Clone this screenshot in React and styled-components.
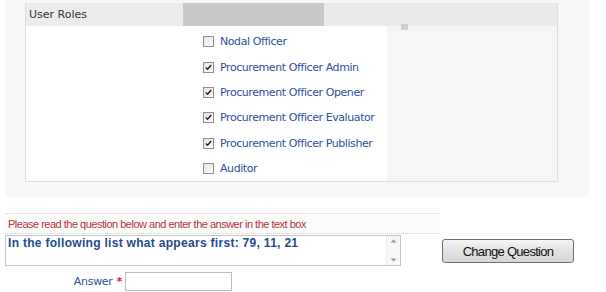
import React from "react";
import styled, { createGlobalStyle } from "styled-components";

const GlobalStyle = createGlobalStyle`
  html, body {
    margin: 0;
    padding: 0;
    background: #ffffff;
    font-family: "Liberation Sans", Arial, sans-serif;
  }
`;

const roles = [
  { name: "Nodal Officer", checked: false },
  { name: "Procurement Officer Admin", checked: true },
  { name: "Procurement Officer Opener", checked: true },
  { name: "Procurement Officer Evaluator", checked: true },
  { name: "Procurement Officer Publisher", checked: true },
  { name: "Auditor", checked: false },
];

const Page = styled.div`
  width: 606px;
  height: 292px;
  overflow: hidden;
`;

// grey rounded panel round the roles table
const Panel = styled.div`
  margin: 0 16px 0 5px;
  height: 198px;
  box-sizing: border-box;
  padding: 3px 32px 0 20px;
  background: #f7f7f7;
  border-radius: 0 0 7px 7px;
`;

const RolesTable = styled.div`
  border: 1px solid #dedede;
  border-top: none;
`;

const HeaderRow = styled.div`
  display: grid;
  grid-template-columns: 157px 141px 1fr;
  height: 22px;
  border-bottom: 1px solid #dedede;
`;

const HeaderLabel = styled.div`
  background: #ececec;
  color: #333333;
  font-family: "DejaVu Sans", Tahoma, sans-serif;
  font-size: 11px;
  line-height: 22px;
  padding: 1px 0 0 3px;
`;

const HeaderBlock = styled.div`
  background: #c9c9c9;
`;

const HeaderFill = styled.div`
  position: relative;
  background: #ebebeb;

  &::after {
    content: "";
    position: absolute;
    left: 77px;
    bottom: -4px;
    width: 7px;
    height: 6px;
    background: #cfcfcf;
  }
`;

const Body = styled.div`
  display: grid;
  grid-template-columns: 361px 1fr;
`;

const RoleList = styled.ul`
  list-style: none;
  margin: 0;
  padding: 3px 0 0 177px;
  background: #ffffff;
`;

const BodyFill = styled.div`
  background: #f6f6f6;
`;

const RoleItem = styled.li`
  display: flex;
  align-items: center;
  height: 25.4px;
`;

const Box = styled.span`
  display: inline-flex;
  align-items: center;
  justify-content: center;
  box-sizing: border-box;
  width: 11px;
  height: 11px;
  border: 1px solid #8e8e8e;
  background: linear-gradient(135deg, #e4e4e4, #ffffff);
  margin-right: 6px;
`;

const RoleName = styled.span`
  color: #2e4f9c;
  font-family: "DejaVu Sans", Tahoma, sans-serif;
  font-size: 11px;
  letter-spacing: -0.42px;
`;

const Bottom = styled.div`
  padding: 15px 0 0 5px;
`;

const QuestionRow = styled.div`
  display: flex;
  align-items: flex-start;
`;

const QuestionColumn = styled.div`
  width: 435px;
`;

const Instruction = styled.div`
  height: 19px;
  border-top: 1px dotted #cfcfcf;
  border-bottom: 1px dotted #cfcfcf;
  background: #fbfbfb;
  color: #b2353a;
  font-size: 11px;
  letter-spacing: -0.5px;
  line-height: 20px;
  padding-left: 3px;
`;

const QuestionBox = styled.div`
  display: flex;
  margin-top: 1px;
  width: 396px;
  height: 31px;
  box-sizing: border-box;
  border: 1px solid #c4c4c4;
  background: #ffffff;
`;

const QuestionText = styled.div`
  flex: 1;
  color: #1f4b8e;
  font-weight: bold;
  font-size: 12px;
  letter-spacing: 0.3px;
  padding: 0 0 0 2px;
`;

const ScrollBar = styled.div`
  width: 13px;
  display: flex;
  flex-direction: column;
  justify-content: space-between;
  align-items: center;
  padding: 3px 0;
  border-left: 1px solid #ececec;
  background: #f7f7f7;
`;

const ChangeButton = styled.button`
  margin: 26px 0 0 2px;
  width: 132px;
  height: 24px;
  border: 1px solid #6f6f6f;
  border-radius: 3px;
  background: linear-gradient(#f6f6f6, #e2e2e2 50%, #d6d6d6);
  color: #111111;
  font-family: "Liberation Sans", Arial, sans-serif;
  font-size: 13px;
  letter-spacing: -0.7px;
  padding: 0;
`;

const AnswerRow = styled.div`
  display: flex;
  align-items: center;
  margin-top: 6px;
`;

const AnswerLabel = styled.label`
  width: 120px;
  text-align: right;
  color: #2e4f9c;
  font-family: "DejaVu Sans", Tahoma, sans-serif;
  font-size: 11px;
  letter-spacing: -0.3px;
`;

const Required = styled.span`
  color: #d3262b;
  font-weight: bold;
  margin: 0 3px 0 4px;
`;

const AnswerInput = styled.input`
  width: 107px;
  height: 19px;
  box-sizing: border-box;
  border: 1px solid #bdbdbd;
  padding: 0 2px;
  margin: 0;
`;

function Check({ checked }) {
  return (
    <Box>
      {checked && (
        <svg width="7" height="7" viewBox="0 0 7 7">
          <path d="M0.8 3.4 L2.6 5.3 L6.2 1" fill="none" stroke="#222" strokeWidth="1.4" />
        </svg>
      )}
    </Box>
  );
}

function Arrow({ up }) {
  return (
    <svg width="7" height="4" viewBox="0 0 7 4">
      <path d={up ? "M0.5 3.5 L3.5 0.5 L6.5 3.5 Z" : "M0.5 0.5 L3.5 3.5 L6.5 0.5 Z"} fill="#9a9a9a" />
    </svg>
  );
}

export default function App() {
  return (
    <Page>
      <GlobalStyle />
      <Panel>
        <RolesTable>
          <HeaderRow>
            <HeaderLabel>User Roles</HeaderLabel>
            <HeaderBlock />
            <HeaderFill />
          </HeaderRow>
          <Body>
            <RoleList>
              {roles.map((r) => (
                <RoleItem key={r.name}>
                  <Check checked={r.checked} />
                  <RoleName>{r.name}</RoleName>
                </RoleItem>
              ))}
            </RoleList>
            <BodyFill />
          </Body>
        </RolesTable>
      </Panel>
      <Bottom>
        <QuestionRow>
          <QuestionColumn>
            <Instruction>Please read the question below and enter the answer in the text box</Instruction>
            <QuestionBox>
              <QuestionText>In the following list what appears first: 79, 11, 21</QuestionText>
              <ScrollBar>
                <Arrow up />
                <Arrow />
              </ScrollBar>
            </QuestionBox>
          </QuestionColumn>
          <ChangeButton type="button">Change Question</ChangeButton>
        </QuestionRow>
        <AnswerRow>
          <AnswerLabel>
            Answer<Required>*</Required>
          </AnswerLabel>
          <AnswerInput type="text" />
        </AnswerRow>
      </Bottom>
    </Page>
  );
}
